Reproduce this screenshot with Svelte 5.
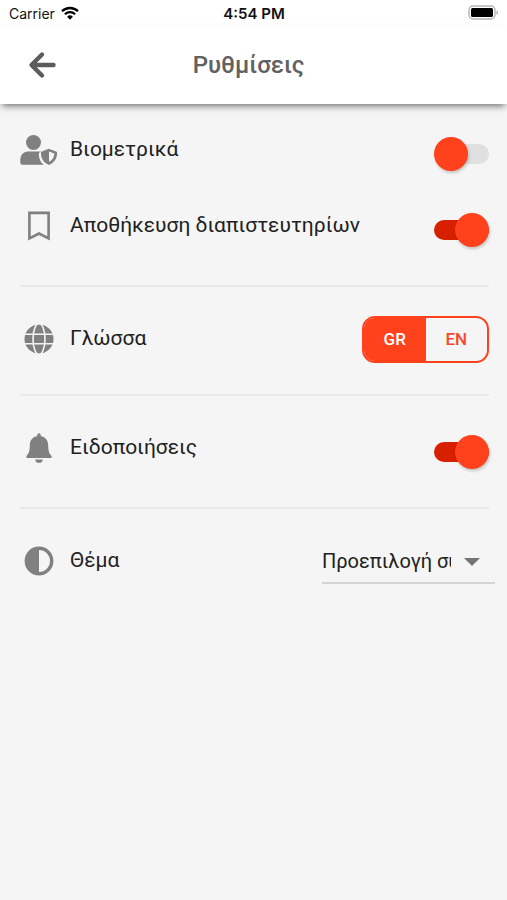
<script>
  let biometrics = false;
  let saveCredentials = true;
  let notifications = true;
  let language = "GR";
  let theme = "system";

  const languages = ["GR", "EN"];
</script>

<div class="status">
  <div class="carrier">
    <span>Carrier</span>
    <svg width="18" height="14" viewBox="0 0 18 14" aria-hidden="true">
      <path
        d="M1 5.2a11.6 11.6 0 0 1 16 0M3.9 8.2a7.3 7.3 0 0 1 10.2 0"
        fill="none"
        stroke="#000"
        stroke-width="2.3"
      />
      <path d="M9 13.7 6.1 10.7a4.2 4.2 0 0 1 5.8 0z" />
    </svg>
  </div>
  <span class="time">4:54 PM</span>
  <svg class="battery" width="31" height="16" viewBox="0 0 31 16" aria-hidden="true">
    <rect x="1" y="1" width="26" height="13" rx="4" fill="#fff" stroke="#b5b5b5" stroke-width="1.4" />
    <rect x="3" y="3" width="22" height="9" rx="1.5" />
    <path d="M28.5 5.2c2 .8 2 3.8 0 4.6z" fill="#aaa" />
  </svg>
</div>

<header>
  <button class="back" aria-label="Πίσω">
    <svg width="28" height="28" viewBox="0 0 28 28" aria-hidden="true">
      <path
        d="M14 3.5 3.5 14 14 24.5M4 14h21.5"
        fill="none"
        stroke="#5c5c5c"
        stroke-width="4.4"
        stroke-linecap="round"
        stroke-linejoin="round"
      />
    </svg>
  </button>
  <h1>Ρυθμίσεις</h1>
</header>

<main>
  <section>
    <div class="row">
      <svg class="icon" viewBox="0 0 38 30" aria-hidden="true">
        <circle cx="13.5" cy="7.5" r="7.5" />
        <path
          d="M8 16.5h11.5c.6 0 1.1.1 1.6.3l-1.6.8c-.5.3-.7.8-.7 1.3 0 4.700 1.8 8.6 5.2 10.900H2.5A2.200 2.200 0 0 1 .3 27.600v-3.400A7.700 7.700 0 0 1 8 16.500z"
        />
        <path
          fill-rule="evenodd"
          d="M28.700 13.700 36 16.500c.7.300 1.100.8 1.100 1.500 0 5.200-2.700 9.500-7.300 11.500-.6.300-1.100.3-1.700 0-4.800-2.100-7.200-6.500-7.200-11.500 0-.7.400-1.200 1-1.500zM29 16.400v10.400c3.300-1.600 5.200-4.600 5.400-8.400z"
        />
      </svg>
      <label for="biometrics">Βιομετρικά</label>
      <input class="switch" id="biometrics" type="checkbox" role="switch" bind:checked={biometrics} />
    </div>
    <div class="row">
      <svg class="icon" viewBox="0 0 38 30" aria-hidden="true">
        <path
          d="M9.4 1.900h19.200v25.500L19 22.500l-9.600 4.900z"
          fill="none"
          stroke="#808080"
          stroke-width="2.6"
        />
      </svg>
      <label for="credentials">Αποθήκευση διαπιστευτηρίων</label>
      <input class="switch" id="credentials" type="checkbox" role="switch" bind:checked={saveCredentials} />
    </div>
  </section>

  <section class="language">
    <div class="row">
      <svg class="icon" viewBox="0 0 38 30" aria-hidden="true">
        <circle cx="19" cy="15" r="14.5" />
        <g fill="none" stroke="#f5f5f5" stroke-width="1.6">
          <ellipse cx="19" cy="15" rx="6" ry="15.5" />
          <path d="M4 10.3h30M4 19.7h30" />
        </g>
      </svg>
      <span class="name" id="language">Γλώσσα</span>
      <div class="segments" role="group" aria-labelledby="language">
        {#each languages as lang}
          <button
            class:active={language === lang}
            aria-pressed={language === lang}
            on:click={() => (language = lang)}>{lang}</button
          >
        {/each}
      </div>
    </div>
  </section>

  <section>
    <div class="row">
      <svg class="icon" viewBox="0 0 38 30" aria-hidden="true">
        <path
          d="M19 .2c1 0 1.7.8 1.7 1.7v1c4.4.8 7.5 4.4 7.500 9 0 6.400 1.200 8.600 3 10.500 1.200 1.300.3 2.600-1.200 2.600H8c-1.500 0-2.400-1.300-1.200-2.600 1.800-1.900 3-4.100 3-10.500 0-4.600 3.100-8.200 7.500-9v-1c0-.9.700-1.700 1.700-1.700z"
        />
        <path d="M15.3 26.4h7.4a3.7 3.4 0 0 1-7.4 0z" />
      </svg>
      <label for="notifications">Ειδοποιήσεις</label>
      <input class="switch" id="notifications" type="checkbox" role="switch" bind:checked={notifications} />
    </div>
  </section>

  <section>
    <div class="row">
      <svg class="icon" viewBox="0 0 38 30" aria-hidden="true">
        <circle cx="19" cy="15" r="12.7" fill="none" stroke="#808080" stroke-width="3.4" />
        <path d="M19 2v26a13 13 0 0 1 0-26z" />
      </svg>
      <label for="theme">Θέμα</label>
      <div class="select">
        <select id="theme" bind:value={theme}>
          <option value="system">Προεπιλογή συστήματος</option>
          <option value="light">Φωτεινό</option>
          <option value="dark">Σκούρο</option>
        </select>
      </div>
    </div>
  </section>
</main>

<style>
  :global(body) {
    background: #f5f5f5;
    font-family: Roboto, "Noto Sans", sans-serif;
    color: #212121;
  }

  .status {
    display: grid;
    grid-template-columns: 1fr auto 1fr;
    align-items: center;
    height: 26px;
    padding: 0 8px 0 9px;
    background: #fff;
    color: #111;
    font-family: Inter, sans-serif;
    font-size: 14px;
  }
  .carrier {
    display: flex;
    align-items: center;
    gap: 6px;
  }
  .time {
    font-size: 15px;
    font-weight: 600;
  }
  .battery {
    justify-self: end;
  }

  header {
    display: grid;
    grid-template-columns: 48px 1fr 48px;
    align-items: center;
    height: 78px;
    padding: 0 28px 0 18px;
    box-sizing: border-box;
    background: #fff;
    box-shadow: 0 4px 7px -2px rgba(0, 0, 0, 0.55);
  }
  h1 {
    margin: 0;
    color: #616161;
    font-size: 24px;
    font-weight: 500;
    text-align: center;
  }
  button {
    border: 0;
    background: none;
    font-family: inherit;
    cursor: pointer;
  }
  .back {
    height: 48px;
    padding: 0;
  }
  .back svg {
    display: block;
    margin: auto;
  }

  main {
    padding: 0 18px 0 20px;
  }
  section {
    padding: 14px 0 21px;
    border-bottom: 2px solid #e8e8e8;
  }
  section:first-child {
    padding-top: 8px;
  }
  section:last-child {
    border-bottom: 0;
  }
  .language {
    padding-bottom: 17px;
  }
  .row {
    display: flex;
    align-items: center;
    height: 76px;
  }
  .icon {
    flex: none;
    width: 38px;
    height: 30px;
    margin-right: 12px;
    fill: #808080;
  }
  label,
  .name {
    flex: 1;
    padding-bottom: 2px;
    font-size: 21px;
    line-height: 28px;
  }

  .switch {
    position: relative;
    appearance: none;
    width: 55px;
    height: 20px;
    margin: 7px 0 0;
    border-radius: 10px;
    background: #e0e0e0;
    cursor: pointer;
  }
  .switch::before {
    content: "";
    position: absolute;
    top: -7px;
    left: 0;
    width: 34px;
    height: 34px;
    border-radius: 50%;
    background: #ff411c;
    box-shadow: 1px 2px 3px rgba(0, 0, 0, 0.2);
  }
  .switch:checked {
    background: #d62000;
  }
  .switch:checked::before {
    left: 21px;
  }

  .segments {
    display: flex;
    width: 127px;
    height: 47px;
    box-sizing: border-box;
    overflow: hidden;
    border: 2px solid #ff411c;
    border-radius: 13px;
  }
  .segments button {
    flex: 1;
    padding: 0;
    color: #f4492c;
    font-size: 17px;
    font-weight: 500;
  }
  .segments .active {
    background: #ff411c;
    color: #fff;
  }

  .select {
    position: relative;
    margin-right: -6px;
  }
  .select::after {
    content: "";
    position: absolute;
    top: 20px;
    right: 15px;
    border: 8px solid transparent;
    border-top-color: #757575;
    border-bottom: 0;
    pointer-events: none;
  }
  select {
    display: block;
    appearance: none;
    width: 173px;
    height: 46px;
    padding: 2px 44px 0 0;
    border: 0;
    border-bottom: 2px solid #d4d4d4;
    border-radius: 0;
    background: none;
    color: #212121;
    font-family: inherit;
    font-size: 20px;
  }
</style>
